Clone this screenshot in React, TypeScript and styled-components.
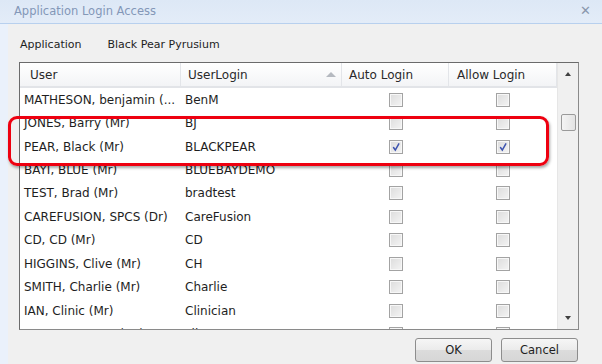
import React from "react";
import styled, { createGlobalStyle } from "styled-components";

const GlobalStyle = createGlobalStyle`
  html, body { margin: 0; padding: 0; background: #eef3fb; }
  * { box-sizing: border-box; }
`;

const FONT = `"DejaVu Sans", Verdana, sans-serif`;

const Window = styled.div`
  position: relative;
  width: 602px;
  height: 364px;
  overflow: hidden;
  display: flex;
  flex-direction: column;
  background: #eaf1fb;
  font-family: ${FONT};
  font-size: 11px;
  color: #1e1e1e;
`;

const TitleBar = styled.div`
  height: 24px;
  flex: none;
  display: flex;
  align-items: center;
  justify-content: space-between;
  padding: 0 14px 2px 14px;
  background: linear-gradient(#dde8f6, #e3ecf8);
  border-bottom: 1px solid #b8d0ee;
  color: #8397b8;
  font-size: 11.5px;
`;

const CloseX = styled.span`
  color: #8a97ac;
  font-size: 13px;
  font-weight: bold;
  margin-right: -3px;
`;

const Body = styled.div`
  flex: 1;
  margin-left: 8px;
  background: #f0f0f0;
  display: flex;
  flex-direction: column;
`;

const AppRow = styled.div`
  height: 38px;
  flex: none;
  display: flex;
  align-items: center;
  padding: 2px 0 0 12px;
  gap: 26px;
`;

const Grid = styled.div`
  margin-left: 11px;
  width: 560px;
  height: 268px;
  flex: none;
  border: 1px solid #6b6b6b;
  border-right-color: #8a8a8a;
  border-bottom-color: #8a8a8a;
  display: flex;
  background: #fff;
  font-size: 12px;
`;

const GridMain = styled.div`
  flex: 1;
  display: flex;
  flex-direction: column;
  overflow: hidden;
`;

const COLS = "161px 161px 107px 108px";

const HeaderRow = styled.div`
  height: 25px;
  flex: none;
  display: grid;
  grid-template-columns: ${COLS};
  background: linear-gradient(#ffffff, #f3f4f6);
  border-bottom: 2px solid #e2e4e8;
`;

const HeaderCell = styled.div<{ $pad: number }>`
  display: flex;
  align-items: center;
  justify-content: space-between;
  padding-left: ${(p) => p.$pad}px;
  padding-right: 8px;
  border-right: 1px solid #e3e5e9;
  color: #2a2a2a;
`;

const SortArrow = styled.span`
  width: 0;
  height: 0;
  border-left: 5px solid transparent;
  border-right: 5px solid transparent;
  border-bottom: 5px solid #b5b9c0;
  margin-right: -3px;
`;

const Row = styled.div`
  height: 23.45px;
  flex: none;
  display: grid;
  grid-template-columns: ${COLS};
  align-items: center;
`;

const Cell = styled.div`
  padding-left: 4px;
  white-space: nowrap;
  overflow: hidden;
`;

const CheckCell = styled.div`
  display: flex;
  justify-content: center;
`;

const Box = styled.span`
  width: 14px;
  height: 14px;
  border: 1px solid #a3a3a3;
  background: linear-gradient(135deg, #dcdcdc, #f4f4f4);
  box-shadow: inset 0 0 0 1px #f7f7f7;
  display: flex;
  align-items: center;
  justify-content: center;
`;

const ScrollBar = styled.div`
  width: 21px;
  flex: none;
  background: #f0f0f0;
  border-left: 1px solid #e6e6e6;
  display: flex;
  flex-direction: column;
  align-items: center;
`;

const ArrowUp = styled.span`
  margin-top: 9px;
  border-left: 3px solid transparent;
  border-right: 3px solid transparent;
  border-bottom: 4px solid #404040;
`;

const Thumb = styled.span`
  margin-top: 38px;
  width: 15px;
  height: 17px;
  border: 1px solid #9a9a9a;
  border-radius: 2px;
  background: linear-gradient(90deg, #f4f4f4, #e3e3e3);
`;

const Spacer = styled.span`
  flex: 1;
`;

const ArrowDown = styled.span`
  margin-bottom: 9px;
  border-left: 3px solid transparent;
  border-right: 3px solid transparent;
  border-top: 4px solid #404040;
`;

const ButtonRow = styled.div`
  display: flex;
  justify-content: flex-end;
  gap: 9px;
  padding-right: 24px;
  margin-top: 8px;
`;

const Button = styled.button`
  width: 77px;
  height: 24px;
  border: 1px solid #8d8d8d;
  border-radius: 3px;
  background: linear-gradient(#f6f6f6 0%, #ebebeb 50%, #dcdcdc 51%, #d6d6d6 100%);
  font-family: ${FONT};
  font-size: 11.5px;
  color: #1e1e1e;
  padding: 0;
`;

const Highlight = styled.div`
  position: absolute;
  left: 8px;
  top: 116px;
  width: 541px;
  height: 50px;
  border: 3px solid #ee0010;
  border-radius: 9px;
  box-shadow: 1px 2px 3px rgba(0, 0, 0, 0.35);
  pointer-events: none;
`;

const Check = () => (
  <svg width="10" height="10" viewBox="0 0 10 10">
    <path d="M2.5 5.5 L4.3 8 L7.8 1.8" fill="none" stroke="#3f55b0" strokeWidth="1.5" strokeLinecap="round" />
  </svg>
);

const rows: [string, string, boolean][] = [
  ["MATHESON, benjamin (...", "BenM", false],
  ["JONES, Barry (Mr)", "BJ", false],
  ["PEAR, Black (Mr)", "BLACKPEAR", true],
  ["BAYI, BLUE (Mr)", "BLUEBAYDEMO", false],
  ["TEST, Brad (Mr)", "bradtest", false],
  ["CAREFUSION, SPCS (Dr)", "CareFusion", false],
  ["CD, CD (Mr)", "CD", false],
  ["HIGGINS, Clive (Mr)", "CH", false],
  ["SMITH, Charlie (Mr)", "Charlie", false],
  ["IAN, Clinic (Mr)", "Clinician", false],
  ["CLINICIAN, Test (Mr)", "clintest", false],
];

export default function App() {
  return (
    <>
      <GlobalStyle />
      <Window>
        <TitleBar>
          <span>Application Login Access</span>
          <CloseX>✕</CloseX>
        </TitleBar>
        <Body>
          <AppRow>
            <span>Application</span>
            <span>Black Pear Pyrusium</span>
          </AppRow>
          <Grid>
            <GridMain>
              <HeaderRow>
                <HeaderCell $pad={10}>User</HeaderCell>
                <HeaderCell $pad={7}>
                  UserLogin
                  <SortArrow />
                </HeaderCell>
                <HeaderCell $pad={7}>Auto Login</HeaderCell>
                <HeaderCell $pad={8}>Allow Login</HeaderCell>
              </HeaderRow>
              {rows.map(([user, login, checked]) => (
                <Row key={login}>
                  <Cell>{user}</Cell>
                  <Cell>{login}</Cell>
                  <CheckCell>
                    <Box>{checked && <Check />}</Box>
                  </CheckCell>
                  <CheckCell>
                    <Box>{checked && <Check />}</Box>
                  </CheckCell>
                </Row>
              ))}
            </GridMain>
            <ScrollBar>
              <ArrowUp />
              <Thumb />
              <Spacer />
              <ArrowDown />
            </ScrollBar>
          </Grid>
          <ButtonRow>
            <Button>OK</Button>
            <Button>Cancel</Button>
          </ButtonRow>
        </Body>
        <Highlight />
      </Window>
    </>
  );
}
